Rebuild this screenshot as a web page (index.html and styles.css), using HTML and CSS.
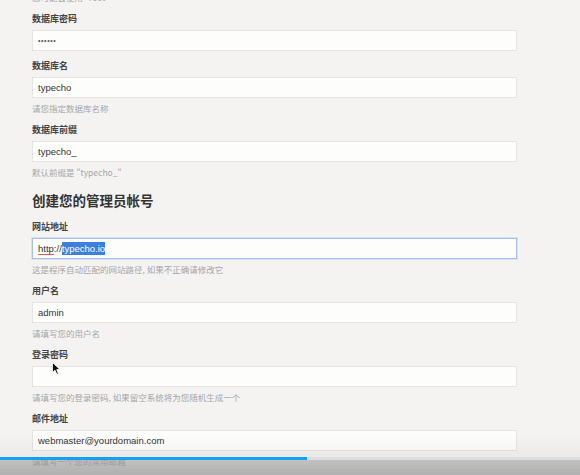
FILE: index.html
```html
<!DOCTYPE html>
<html lang="zh-CN">
<head>
<meta charset="utf-8">
<title>Typecho 安装</title>
<link rel="stylesheet" href="styles.css">
</head>
<body>
<div class="page">
  <p class="hint top-hint">您可能会使用 "root"</p>

  <div class="field">
    <div class="label">数据库密码</div>
    <div class="input pw">••••••</div>
  </div>

  <div class="field">
    <div class="label">数据库名</div>
    <div class="input">typecho</div>
    <p class="hint">请您指定数据库名称</p>
  </div>

  <div class="field">
    <div class="label">数据库前缀</div>
    <div class="input">typecho_</div>
    <p class="hint">默认前缀是 "typecho_"</p>
  </div>

  <h2 class="heading">创建您的管理员帐号</h2>

  <div class="field">
    <div class="label">网站地址</div>
    <div class="input focused"><span class="spell">http</span>://<span class="sel">typecho.io</span></div>
    <p class="hint">这是程序自动匹配的网站路径, 如果不正确请修改它</p>
  </div>

  <div class="field">
    <div class="label">用户名</div>
    <div class="input">admin</div>
    <p class="hint">请填写您的用户名</p>
  </div>

  <div class="field">
    <div class="label">登录密码</div>
    <div class="input"></div>
    <p class="hint">请填写您的登录密码, 如果留空系统将为您随机生成一个</p>
  </div>

  <div class="field">
    <div class="label">邮件地址</div>
    <div class="input">webmaster@yourdomain.com</div>
    <p class="hint">请填写一个您的常用邮箱</p>
  </div>
</div>

<svg class="pointer" width="9" height="13" viewBox="0 0 9 13" aria-hidden="true">
  <path d="M0.5 0.5 L0.5 10.5 L3 8.2 L4.8 12.3 L6.4 11.6 L4.7 7.6 L8 7.6 Z" fill="#111" stroke="#fff" stroke-width="0.8"/>
</svg>

<div class="player">
  <div class="shade"></div>
  <div class="progress"><div class="played" style="width:307px"></div></div>
  <div class="controls"></div>
</div>
</body>
</html>
```

FILE: styles.css
```css
html, body {
  margin: 0;
  padding: 0;
}
body {
  background: #f4f3f2;
  width: 580px;
  height: 475px;
  overflow: hidden;
  position: relative;
  font-family: "Noto Sans CJK SC", "Liberation Sans", sans-serif;
}
.page {
  padding-left: 32px;
  width: 485px;
}
.hint {
  margin: 3px 0 0;
  font-size: 8.5px;
  line-height: 14px;
  height: 14px;
  color: #a6a6a6;
  white-space: nowrap;
}
.top-hint {
  margin-top: -10px;
}
.field {
  margin-top: 7px;
}
.label {
  font-size: 9px;
  font-weight: bold;
  line-height: 16px;
  height: 16px;
  color: #444;
  margin-bottom: 3px;
}
.input {
  box-sizing: border-box;
  height: 21px;
  background: #fdfefc;
  border: 1px solid #e4e4e2;
  padding-left: 5px;
  font-family: "Liberation Sans", Arial, sans-serif;
  font-size: 9.5px;
  line-height: 19px;
  color: #333;
  white-space: nowrap;
}
.input.pw {
  font-size: 7px;
  letter-spacing: 0.6px;
  color: #555;
}
.input.focused {
  border-color: #a6bfe8;
  box-shadow: 0 0 0 1px #d4e1f6;
}
.spell {
  text-decoration: underline solid #e05a5a;
  text-decoration-thickness: 1px;
  text-underline-offset: 2px;
}
.sel {
  background: #3d7fdc;
  color: #fff;
  padding: 1px 0;
}
.heading {
  margin: 9px 0 0;
  font-size: 13.5px;
  line-height: 24px;
  height: 24px;
  font-weight: bold;
  color: #333;
}
.pointer {
  position: absolute;
  left: 52px;
  top: 362px;
}
.player {
  position: absolute;
  left: 0;
  right: 0;
  bottom: 0;
  height: 40px;
  display: flex;
  flex-direction: column;
}
.shade {
  height: 22px;
  background: linear-gradient(to bottom, rgba(0, 0, 0, 0), rgba(0, 0, 0, 0.04));
}
.progress {
  height: 3px;
  background: #dcdcdc;
}
.played {
  height: 100%;
  background: #14a0f2;
}
.controls {
  flex: 1;
  background: linear-gradient(to bottom, rgba(150, 150, 150, 0.55), rgba(135, 135, 135, 0.62));
}
```
